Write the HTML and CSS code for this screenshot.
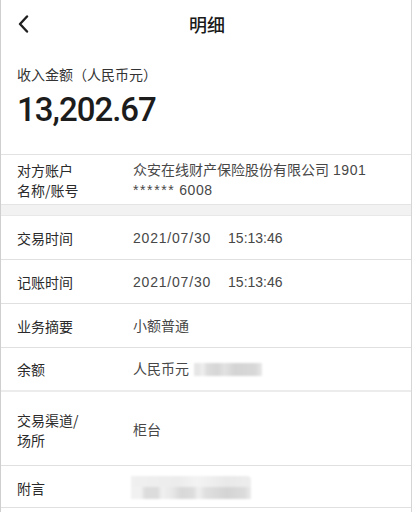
FILE: index.html
```html
<!DOCTYPE html>
<html lang="zh-CN">
<head>
<meta charset="utf-8">
<link rel="stylesheet" href="styles.css">
</head>
<body>
<div class="page">
  <header class="nav">
    <svg class="back" width="12" height="18" viewBox="0 0 12 18"><path d="M10 1.5 L3 9 L10 16.5" fill="none" stroke="#1f1f1f" stroke-width="2.4" stroke-linecap="round" stroke-linejoin="round"/></svg>
    <div class="title">明细</div>
  </header>
  <section class="amount">
    <div class="amount-label">收入金额（人民币元）</div>
    <div class="amount-value">13,202.67</div>
  </section>
  <div class="row row-account">
    <div class="label">对方账户<br>名称/账号</div>
    <div class="value">众安在线财产保险股份有限公司 <span class="num">1901</span><br><span class="stars">******</span> <span class="num">6008</span></div>
  </div>
  <div class="band"></div>
  <div class="row">
    <div class="label">交易时间</div>
    <div class="value"><span class="num">2021/07/30</span><span class="time">15:13:46</span></div>
  </div>
  <div class="row">
    <div class="label">记账时间</div>
    <div class="value"><span class="num">2021/07/30</span><span class="time">15:13:46</span></div>
  </div>
  <div class="row">
    <div class="label">业务摘要</div>
    <div class="value">小额普通</div>
  </div>
  <div class="row row-thick">
    <div class="label">余额</div>
    <div class="value">人民币元 <span class="blur blur-balance"></span></div>
  </div>
  <div class="row row-channel">
    <div class="label">交易渠道/<br>场所</div>
    <div class="value">柜台</div>
  </div>
  <div class="row row-note">
    <div class="label">附言</div>
    <div class="value"><span class="blur-note"><span class="bn-top"></span><span class="bn-bottom"></span></span></div>
  </div>
</div>
</body>
</html>
```
FILE: styles.css
```css
html, body {
  margin: 0;
  padding: 0;
  background: #ffffff;
}
body {
  font-family: "Liberation Sans", "Noto Sans CJK SC", sans-serif;
  color: #262626;
}
.page {
  width: 410px;
  height: 512px;
  border-left: 1px solid #cfcfcf;
  border-right: 1px solid #d6d6d6;
  overflow: hidden;
  background: #fff;
}
.nav {
  height: 48px;
  position: relative;
  display: flex;
  align-items: center;
  justify-content: center;
}
.back {
  position: absolute;
  left: 16px;
  top: 15px;
}
.title {
  font-family: "Noto Sans CJK SC", sans-serif;
  font-size: 18px;
  font-weight: 500;
  color: #1a1a1a;
  margin-left: 2px;
}
.amount {
  padding: 16px 0 0 16px;
  border-bottom: 1px solid #e2e2e2;
  box-sizing: border-box;
  height: 107px;
}
.amount-label {
  font-family: "Noto Sans CJK SC", sans-serif;
  font-size: 14px;
  line-height: 20px;
  color: #333;
}
.amount-value {
  margin-top: 6px;
  font-family: Roboto, "Liberation Sans", sans-serif;
  font-size: 33px;
  font-weight: 500;
  letter-spacing: -1px;
  color: #1c1c1c;
  line-height: 40px;
}
.row {
  display: flex;
  align-items: center;
  min-height: 44px;
  border-bottom: 1px solid #e0e0e0;
  box-sizing: border-box;
  font-size: 14px;
  line-height: 20px;
}
.label {
  width: 116px;
  padding-left: 16px;
  flex-shrink: 0;
  font-family: "Noto Sans CJK SC", sans-serif;
  color: #2a2a2a;
}
.value {
  font-family: "Liberation Sans", "Noto Sans CJK SC", sans-serif;
  color: #474747;
  display: flex;
  align-items: center;
  white-space: nowrap;
}
.num {
  letter-spacing: 0.8px;
}
.time {
  margin-left: 17px;
}
.row-account {
  height: 50px;
  border-bottom: 1px solid #e4e4e4;
}
.row-account .value {
  display: block;
}
.row-account .num {
  letter-spacing: 0.6px;
}
.stars {
  letter-spacing: 1.6px;
}
.band {
  height: 10px;
  background: #f2f2f2;
  border-bottom: 1px solid #e8e8e8;
}
.row-thick {
  border-bottom: 2px solid #ececec;
}
.row-channel {
  height: 74px;
  padding-top: 2px;
}
.row-note {
  height: 42px;
  min-height: 42px;
  padding-top: 2px;
}
.blur {
  display: inline-block;
}
.blur-balance {
  width: 68px;
  height: 13px;
  margin-left: 5px;
  background: linear-gradient(90deg, #e6e6e6 0%, #e6e6e6 8%, #f0f0f0 12%, #dcdcdc 20%, #d6d6d6 35%, #e2e2e2 45%, #d4d4d4 60%, #d8d8d8 90%, #e8e8e8 100%);
  filter: blur(0.8px);
}
.blur-note {
  display: flex;
  flex-direction: column;
  width: 120px;
  margin-left: -2px;
  filter: blur(1px);
}
.bn-top {
  height: 11px;
  background: linear-gradient(90deg, #f0f0f0 0%, #ececec 40%, #f3f3f3 55%, #e9e9e9 80%, #ededed 100%);
  border-radius: 0 4px 0 0;
}
.bn-bottom {
  height: 12px;
  background: linear-gradient(90deg, #f1f1f1 0%, #f1f1f1 8%, #dcdcdc 12%, #dcdcdc 22%, #f0f0f0 26%, #e8e8e8 34%, #d8d8d8 42%, #dddddd 52%, #f0f0f0 56%, #e0e0e0 62%, #d4d4d4 80%, #dcdcdc 95%, #ececec 100%);
}
```
